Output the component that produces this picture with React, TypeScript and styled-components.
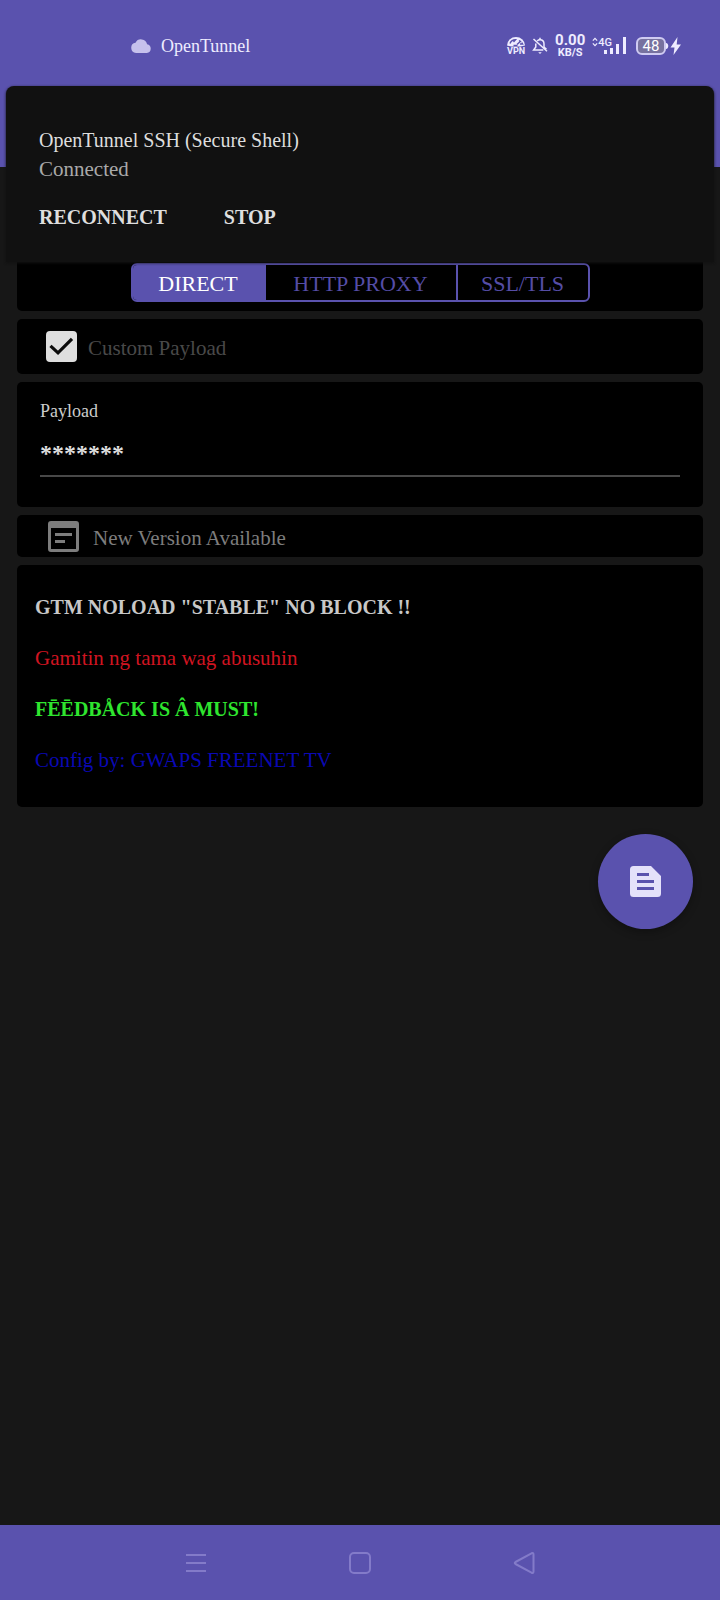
import React, { useState } from "react";
import styled, { createGlobalStyle } from "styled-components";

const purple = "#5a52ae";
const serif = '"Liberation Serif", "Times New Roman", serif';
const sans = 'Roboto, "Liberation Sans", sans-serif';

const GlobalStyle = createGlobalStyle`
  *, *::before, *::after { box-sizing: border-box; }
  body { margin: 0; background: #171717; font-family: ${serif}; color: #dedede; }
  button, input { font: inherit; color: inherit; margin: 0; }
  svg { display: block; flex: none; }
`;

const Screen = styled.div`
  position: relative;
  display: flex;
  flex-direction: column;
  min-height: 100vh;
  background: #171717;
`;

const Header = styled.header`
  height: 167px;
  background: ${purple};
`;

const StatusBar = styled.div`
  display: flex;
  align-items: center;
  justify-content: space-between;
  height: 92px;
  padding: 0 38px 0 131px;
  color: #eeecff;
`;

const StatusGroup = styled.div<{ $gap: number }>`
  display: flex;
  align-items: center;
  gap: ${(p) => p.$gap}px;
`;

const AppName = styled.span`
  font-size: 18px;
  line-height: 24px;
`;

const Stack = styled.div`
  display: flex;
  flex-direction: column;
  align-items: center;
  font-family: ${sans};
`;

const TinyLabel = styled.span`
  font: 700 9px/9px ${sans};
`;

const Rate = styled.span`
  font: 700 15px/13px ${sans};
`;

const RateUnit = styled.span`
  font: 700 11px/11px ${sans};
`;

const Signal = styled.div`
  display: flex;
  align-items: flex-start;
`;

const Network = styled.span`
  margin-right: -8px;
  font: 500 11px/12px ${sans};
`;

const Battery = styled.div`
  display: flex;
  align-items: center;
  margin-left: 3px;
`;

const BatteryBody = styled.span`
  width: 30px;
  height: 18px;
  border: 2px solid #cfcbf2;
  border-radius: 6px;
  background: #77729f;
  color: #ffffff;
  font: 400 15px/14px ${sans};
  text-align: center;
`;

const Notification = styled.section`
  position: absolute;
  top: 86px;
  left: 6px;
  right: 6px;
  z-index: 1;
  display: flex;
  flex-direction: column;
  height: 176px;
  padding: 40px 33px 0;
  border-radius: 8px 8px 0 0;
  background: #111111;
  box-shadow: 0 1px 3px #111111;
`;

const NotificationTitle = styled.h1`
  margin: 0;
  font-size: 20px;
  line-height: 29px;
  font-weight: 400;
`;

const NotificationText = styled.p`
  margin: 0;
  font-size: 21px;
  line-height: 29px;
  color: #a9a9a9;
`;

const Actions = styled.div`
  display: flex;
  gap: 57px;
  margin-top: 21px;
`;

const ActionButton = styled.button`
  padding: 0;
  border: 0;
  background: none;
  font-size: 20px;
  line-height: 24px;
  font-weight: 700;
`;

const Main = styled.main`
  display: flex;
  flex: 1;
  flex-direction: column;
  gap: 8px;
  padding: 8px 17px;
`;

const Card = styled.section<{ $pad: string }>`
  padding: ${(p) => p.$pad};
  border-radius: 5px;
  background: #000000;
`;

const Segments = styled.div`
  display: grid;
  grid-template-columns: 131px 192px 132px;
  width: max-content;
  height: 39px;
  margin: 0 auto;
  overflow: hidden;
  border: 2px solid ${purple};
  border-radius: 6px;
`;

const Segment = styled.button<{ $active: boolean }>`
  padding: 2px 0 0;
  border: 0;
  border-left: 2px solid ${purple};
  background: ${(p) => (p.$active ? purple : "transparent")};
  color: ${(p) => (p.$active ? "#ffffff" : "#554da6")};
  font-size: 22px;
  line-height: 33px;
  &:first-child { border-left: 0; }
`;

const CheckRow = styled.label`
  display: flex;
  align-items: center;
  gap: 11px;
  color: #494949;
`;

const RowText = styled.span`
  padding-top: 3px;
  font-size: 21px;
  line-height: 28px;
`;

const CheckBox = styled.span`
  display: grid;
  width: 31px;
  height: 31px;
  > * { grid-area: 1 / 1; }
  svg { pointer-events: none; z-index: 0; }
`;

const CheckInput = styled.input`
  width: 31px;
  height: 31px;
  appearance: none;
  border: 2px solid #dedede;
  border-radius: 4px;
  &:checked { background: #dedede; }
`;

const Field = styled.div`
  display: flex;
  flex-direction: column;
`;

const FieldLabel = styled.label`
  font-size: 18px;
  line-height: 24px;
  color: #cccccc;
`;

const FieldInput = styled.input`
  width: 100%;
  height: 54px;
  padding: 8px 0 0;
  border: 0;
  border-bottom: 2px solid #484848;
  border-radius: 0;
  outline: 0;
  background: none;
  font-size: 24px;
  font-weight: 700;
`;

const UpdateRow = styled.div`
  display: flex;
  align-items: center;
  gap: 14px;
  height: 32px;
  color: #7d7d7d;
`;

const Message = styled.p<{ $color: string; $bold?: boolean }>`
  margin: 0;
  color: ${(p) => p.$color};
  font-size: ${(p) => (p.$bold ? 20 : 21)}px;
  line-height: 51px;
  font-weight: ${(p) => (p.$bold ? 700 : 400)};
`;

const Fab = styled.button`
  display: grid;
  place-items: center;
  align-self: flex-end;
  width: 95px;
  height: 95px;
  margin: 19px 10px 0 0;
  padding: 0;
  border: 0;
  border-radius: 50%;
  background: ${purple};
  box-shadow: 0 3px 8px rgba(0, 0, 0, 0.3);
`;

const NavBar = styled.nav`
  display: flex;
  align-items: center;
  justify-content: center;
  gap: 132px;
  height: 75px;
  background: ${purple};
`;

const NavButton = styled.button`
  display: grid;
  place-items: center;
  width: 32px;
  height: 32px;
  padding: 0;
  border: 0;
  background: none;
  color: #837bc9;
`;

const modes = ["DIRECT", "HTTP PROXY", "SSL/TLS"];

export default function App() {
  const [mode, setMode] = useState("DIRECT");
  const [custom, setCustom] = useState(true);
  const [payload, setPayload] = useState("*******");

  return (
    <Screen>
      <GlobalStyle />
      <Header>
        <StatusBar>
          <StatusGroup $gap={10}>
            <svg width="20" height="14" viewBox="0 0 20 14" fill="#c6c1ec">
              <path d="M16.1 5.3A6.2 6.2 0 0 0 4.5 3.7 5.2 5.2 0 0 0 5 14h10.8a4.4 4.4 0 0 0 .3-8.7z" />
            </svg>
            <AppName>OpenTunnel</AppName>
          </StatusGroup>
          <StatusGroup $gap={7}>
            <Stack>
              <svg width="18" height="10" viewBox="0 0 18 10">
                <path d="M0 8.500a9 8.500 0 0 1 18 0l-4.500 1h-9z" fill="currentColor" />
                <path d="M3 6.500C4 4 6 2.800 8.500 2.800L6.500 5M12 3.500l1.500.8L10 7.500M14.800 5.500l.8 1.500H13" fill="none" stroke={purple} strokeWidth="1.400" />
                <path d="M6.500 8.500h4" stroke={purple} strokeWidth="1.500" />
              </svg>
              <TinyLabel>VPN</TinyLabel>
            </Stack>
            <svg width="16" height="18" viewBox="0 0 16 18" fill="none" stroke="currentColor" strokeWidth="1.5">
              <path d="M5.2 3.9A4 4 0 0 1 8 2.7c2.5 0 4 1.9 4 4.3v3M3.8 6.5V10L1.6 13h9.7" />
              <path d="M8 2.7V.8M1.5 2 15 14.2M12 10l2.5 2.2" />
              <path d="M6.2 15.2h3.6L8 17z" fill="currentColor" stroke="none" />
            </svg>
            <Stack>
              <Rate>0.00</Rate>
              <RateUnit>KB/S</RateUnit>
            </Stack>
            <Signal>
              <svg width="6" height="10" viewBox="0 0 7 11" fill="none" stroke="currentColor" strokeWidth="1.400">
                <path d="M1 4 3.500 1.300 6 4M1 7l2.500 2.700L6 7" />
              </svg>
              <Network>4G</Network>
              <svg width="22" height="18" viewBox="0 0 22 18" fill="currentColor">
                <path d="M0 13h3v4H0zM6 11h3v6H6zM12 7h3v10h-3zM19 0h3v17h-3z" />
              </svg>
            </Signal>
            <Battery>
              <BatteryBody>48</BatteryBody>
              <svg width="16" height="18" viewBox="0 0 16 18" fill="currentColor">
                <path d="M0 6c3 0 3 6 0 6zM11.500 0 4.500 10.500h4L7.500 18 15 7.500h-4.300z" />
              </svg>
            </Battery>
          </StatusGroup>
        </StatusBar>
      </Header>

      <Notification>
        <NotificationTitle>OpenTunnel SSH (Secure Shell)</NotificationTitle>
        <NotificationText>Connected</NotificationText>
        <Actions>
          <ActionButton type="button">RECONNECT</ActionButton>
          <ActionButton type="button">STOP</ActionButton>
        </Actions>
      </Notification>

      <Main>
        <Card $pad="88px 0 9px">
          <Segments role="group" aria-label="Connection mode">
            {modes.map((m) => (
              <Segment key={m} type="button" $active={m === mode} aria-pressed={m === mode} onClick={() => setMode(m)}>
                {m}
              </Segment>
            ))}
          </Segments>
        </Card>

        <Card $pad="12px 29px">
          <CheckRow>
            <CheckBox>
              <CheckInput type="checkbox" checked={custom} onChange={(e) => setCustom(e.target.checked)} />
              {custom && (
                <svg width="31" height="31" viewBox="0 0 31 31" fill="none">
                  <path d="M4.500 14.800 12 21.800 26 7.800" stroke="#0b0b0b" strokeWidth="3.200" />
                </svg>
              )}
            </CheckBox>
            <RowText>Custom Payload</RowText>
          </CheckRow>
        </Card>

        <Card $pad="17px 23px 30px">
          <Field>
            <FieldLabel htmlFor="payload">Payload</FieldLabel>
            <FieldInput id="payload" value={payload} onChange={(e) => setPayload(e.target.value)} />
          </Field>
        </Card>

        <Card $pad="5px 31px">
          <UpdateRow>
            <svg width="31" height="31" viewBox="0 0 31 31">
              <path
                fill="currentColor"
                fillRule="evenodd"
                d="M3 0h25a3 3 0 0 1 3 3v25a3 3 0 0 1-3 3H3a3 3 0 0 1-3-3V3a3 3 0 0 1 3-3zM3 7v21h25V7zM7 12h17v3H7zM7 19h10v3H7z"
              />
            </svg>
            <RowText>New Version Available</RowText>
          </UpdateRow>
        </Card>

        <Card $pad="17px 18px 21px">
          <Message $color="#c8c8c8" $bold>GTM NOLOAD "STABLE" NO BLOCK !!</Message>
          <Message $color="#d01420">Gamitin ng tama wag abusuhin</Message>
          <Message $color="#2fe52f" $bold>FĒĒDBÅCK IS Â MUST!</Message>
          <Message $color="#0a08b4">Config by: GWAPS FREENET TV</Message>
        </Card>

        <Fab type="button" aria-label="Open log">
          <svg width="31" height="31" viewBox="0 0 31 31" fill="#e4e1fa" fillRule="evenodd">
            <path d="M3.500 0H21l10 10v17.500a3.500 3.500 0 0 1-3.500 3.500h-24A3.500 3.500 0 0 1 0 27.500v-24A3.500 3.500 0 0 1 3.500 0zM7 7v3h12V7zM7 14v3h17v-3zM7 21v3h17v-3z" />
          </svg>
        </Fab>
      </Main>

      <NavBar aria-label="System">
        <NavButton type="button" aria-label="Recent apps">
          <svg width="20" height="20" viewBox="0 0 20 20" stroke="currentColor" strokeWidth="2">
            <path d="M0 2h20M0 10h20M0 18h20" />
          </svg>
        </NavButton>
        <NavButton type="button" aria-label="Home">
          <svg width="22" height="22" viewBox="0 0 22 22" fill="none" stroke="currentColor" strokeWidth="2">
            <rect x="1" y="1" width="20" height="20" rx="4" />
          </svg>
        </NavButton>
        <NavButton type="button" aria-label="Back">
          <svg width="22" height="22" viewBox="0 0 22 22" fill="none" stroke="currentColor" strokeWidth="2" strokeLinejoin="round">
            <path d="M2.500 10 18.500 1.300q2-.8 2 1.200v17q0 2-2 1.200L2.500 12q-1.500-1 0-2z" />
          </svg>
        </NavButton>
      </NavBar>
    </Screen>
  );
}
